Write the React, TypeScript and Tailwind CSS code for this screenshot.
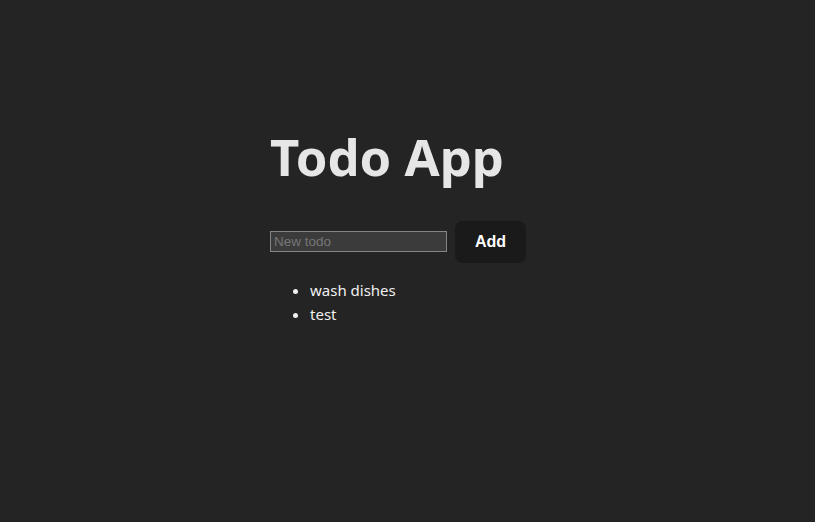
import React, { useState } from 'react';

export default function App() {
  const [todos, setTodos] = useState<string[]>(['wash dishes', 'test']);
  const [text, setText] = useState('');

  const addTodo = () => {
    if (!text.trim()) return;
    setTodos([...todos, text.trim()]);
    setText('');
  };

  return (
    <div className="min-h-screen w-full bg-[#242424] text-white/[0.87] font-['Noto_Sans',sans-serif]">
      <div className="pl-[270px] pt-[129px]">
        <h1 className="text-[50.8px] leading-[1.1] font-bold text-[#e6e6e6] mb-[36px]">Todo App</h1>

        <div className="flex items-center gap-2">
          <input
            value={text}
            onChange={(e) => setText(e.target.value)}
            placeholder="New todo"
            className="w-[177px] h-[21px] px-[3px] bg-[#3b3b3b] border border-[#858585] text-[13.5px] font-['Liberation_Sans',Arial,sans-serif] text-white placeholder:text-[#767676] outline-none"
          />
          <button
            onClick={addTodo}
            className="h-[42px] w-[71px] rounded-lg bg-[#1a1a1a] text-white text-base font-bold font-['Liberation_Sans',Arial,sans-serif]"
          >
            Add
          </button>
        </div>

        {/* list */}
        <ul className="mt-[15px] pl-10 list-disc text-[15px] leading-6 text-[#f0f0f0]">
          {todos.map((t, i) => (
            <li key={i}>{t}</li>
          ))}
        </ul>
      </div>
    </div>
  );
}
